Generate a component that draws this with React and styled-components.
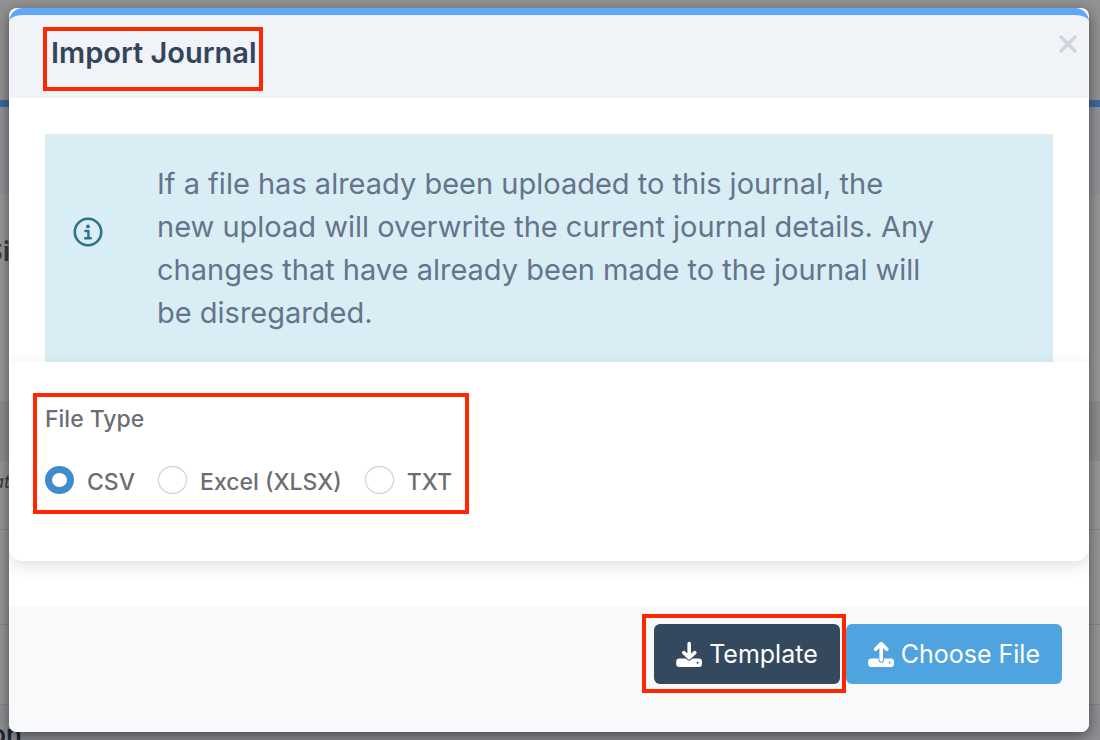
import React, { useState } from 'react';
import styled, { createGlobalStyle } from 'styled-components';

const fileTypes = [
  { value: 'csv', label: 'CSV' },
  { value: 'xlsx', label: 'Excel (XLSX)' },
  { value: 'txt', label: 'TXT' },
];

const arrows = {
  download: 'M13.2 2.6V16.6M7.8 11.6L13.2 16.8L18.8 11.6',
  upload: 'M13.2 19V2.8M7.6 8.2L13.2 2.6L18.8 8.2',
};

// arrow over a drive; $cut is the button colour showing round the arrow
const DriveIcon = ({ type, cut }) => (
  <svg viewBox="0 0 26 26" width="26" height="26" aria-hidden="true">
    <rect x="0.2" y="17.6" width="25.8" height="8.4" rx="3.2" fill="currentColor" />
    <circle cx="21.6" cy="21.8" r="1" fill={cut} />
    <g fill="none" strokeLinecap="round" strokeLinejoin="round">
      <path d={arrows[type]} stroke={cut} strokeWidth="5.4" />
      <path d={arrows[type]} stroke="currentColor" strokeWidth="3.6" />
    </g>
  </svg>
);

const App = () => {
  const [fileType, setFileType] = useState('csv');

  return (
    <>
      <GlobalStyle />
      <Page aria-hidden="true">
        <Band $height={100} $bg="#929292" />
        <Band $height={7} $bg="#3a6aa6" />
        <Band $height={87} $bg="#919398" />
        <Band $height={207} $bg="#989997" $pad={40}>
          <Peek $size={27} $bold>Si</Peek>
        </Band>
        <Band $height={60} $bg="#8d8e8d" />
        <Band $height={69} $bg="#979897" $line $pad={3}>
          <Peek $size={18} $italic>at</Peek>
        </Band>
        <Band $height={95} $bg="#979896" $line />
        <Band $height={80} $bg="#979896" $line />
        <Band $height={36} $bg="#8f9095" $pad={12}>
          <Peek $size={26} $bold $wide>on</Peek>
        </Band>
      </Page>

      <Overlay>
        <Modal role="dialog" aria-modal="true" aria-labelledby="import-title">
          <Header>
            <TitleMark>
              <Title id="import-title">Import Journal</Title>
            </TitleMark>
            <Close type="button" aria-label="Close">
              <svg viewBox="0 0 18 18" width="18" height="18" aria-hidden="true">
                <path d="M2 2L16 16M16 2L2 16" fill="none" stroke="currentColor" strokeWidth="3.2" strokeLinecap="round" />
              </svg>
            </Close>
          </Header>

          <Body>
            <Notice>
              <InfoIcon viewBox="0 0 30 30" aria-hidden="true">
                <circle cx="15" cy="15" r="13.2" fill="none" stroke="currentColor" strokeWidth="2.6" />
                <circle cx="15" cy="9.4" r="1.9" fill="currentColor" />
                <path d="M12.4 14H15.4V21M12.2 21.2H17.8" fill="none" stroke="currentColor" strokeWidth="2.4" strokeLinecap="round" strokeLinejoin="round" />
              </InfoIcon>
              <NoticeText>
                If a file has already been uploaded to this journal, the new upload will overwrite the
                current journal details. Any changes that have already been made to the journal will be
                disregarded.
              </NoticeText>
            </Notice>
          </Body>

          <Card>
            <TypeMark role="radiogroup" aria-labelledby="type-label">
              <TypeLabel id="type-label">File Type</TypeLabel>
              <Options>
                {fileTypes.map(({ value, label }) => (
                  <Option key={value}>
                    <Radio
                      type="radio"
                      name="fileType"
                      value={value}
                      checked={fileType === value}
                      onChange={() => setFileType(value)}
                    />
                    {label}
                  </Option>
                ))}
              </Options>
            </TypeMark>
          </Card>

          <Footer>
            <ButtonMark>
              <Button type="button" $bg="#34495e">
                <DriveIcon type="download" cut="#34495e" />
                Template
              </Button>
            </ButtonMark>
            <Button type="button" $bg="#4fa4e0">
              <DriveIcon type="upload" cut="#4fa4e0" />
              Choose File
            </Button>
          </Footer>
        </Modal>
      </Overlay>
    </>
  );
};

const GlobalStyle = createGlobalStyle`
  * {
    box-sizing: border-box;
  }

  body {
    margin: 0;
    background: #8f9095;
    font-family: Inter, "Liberation Sans", sans-serif;
    overflow: hidden;
  }
`;

const Page = styled.div`
  display: flex;
  flex-direction: column;
`;

const Band = styled.div`
  height: ${(p) => p.$height}px;
  padding-top: ${(p) => p.$pad || 0}px;
  background: ${(p) => p.$bg};
  border-bottom: ${(p) => (p.$line ? '1px solid #858685' : 'none')};
  overflow: hidden;
`;

/* the page text runs in from the left edge and is cut there */
const Peek = styled.span`
  display: flex;
  justify-content: flex-end;
  width: ${(p) => (p.$wide ? 22 : 10)}px;
  font-size: ${(p) => p.$size}px;
  line-height: 36px;
  font-weight: ${(p) => (p.$bold ? 600 : 400)};
  font-style: ${(p) => (p.$italic ? 'italic' : 'normal')};
  color: ${(p) => (p.$wide ? '#1d2836' : '#3b3d40')};
`;

const Overlay = styled.div`
  position: absolute;
  inset: 0;
  padding: 8px 11px 8px 9px;
`;

const Modal = styled.div`
  background: #fff;
  border-radius: 8px;
  box-shadow: 0 4px 14px rgba(0, 0, 0, 0.5);
  overflow: hidden;
`;

const Mark = styled.div`
  border: 4px solid #ff2600;
`;

const Header = styled.header`
  display: flex;
  align-items: flex-start;
  justify-content: space-between;
  padding: 12px 12px 7px 34px;
  background: #f0f3f8;
  border-top: 7px solid #60a5fa;
  border-radius: 14px 14px 0 0;
`;

const TitleMark = styled(Mark)`
  padding: 0 3px 12px 4px;
`;

const Title = styled.h1`
  margin: 0;
  font-size: 29px;
  line-height: 44px;
  font-weight: 600;
  color: #34455a;
`;

const Close = styled.button`
  display: flex;
  margin-top: 8px;
  padding: 0;
  border: none;
  background: none;
  color: #ced5dc;
  cursor: pointer;
`;

const Body = styled.div`
  padding: 36px 36px 0;
`;

const Notice = styled.div`
  display: flex;
  align-items: flex-start;
  gap: 54px;
  padding: 27px 112px 28px 28px;
  background: #d9edf5;
  border-top: 1px solid #e3e8ea;
  border-right: 1px solid #e3e8ea;
`;

const InfoIcon = styled.svg`
  flex: none;
  width: 30px;
  height: 30px;
  margin-top: 55px;
  color: #31708f;
`;

const NoticeText = styled.p`
  margin: 0;
  font-size: 29px;
  line-height: 43px;
  color: #64748b;
`;

const Card = styled.section`
  padding: 31px 24px 47px;
  background: #fff;
  border-radius: 0 0 14px 14px;
  box-shadow: 0 5px 16px rgba(30, 50, 45, 0.14);
`;

const TypeMark = styled(Mark)`
  width: fit-content;
  padding: 8px 13px 12px 8px;
`;

const TypeLabel = styled.div`
  margin-bottom: 33px;
  font-size: 23px;
  line-height: 28px;
  font-weight: 500;
  color: #6d6e71;
`;

const Options = styled.div`
  display: flex;
  gap: 23px;
`;

const Option = styled.label`
  display: flex;
  align-items: flex-start;
  gap: 13px;
  font-size: 23px;
  line-height: 32px;
  font-weight: 500;
  color: #6d6e71;
  white-space: nowrap;
`;

const Radio = styled.input`
  appearance: none;
  width: 29px;
  height: 28px;
  margin: 0;
  border: 1px solid #c9cacc;
  border-radius: 50%;
  background: #fff;

  &:checked {
    border: 7px solid #428bca;
  }
`;

const Footer = styled.footer`
  display: flex;
  align-items: center;
  justify-content: flex-end;
  margin-top: 45px;
  padding: 8px 27px 39px;
  background: #f8f9fb;
`;

const ButtonMark = styled(Mark)`
  padding: 6px 2px 5px 8px;
`;

const Button = styled.button`
  display: flex;
  align-items: center;
  gap: 7px;
  height: 60px;
  padding: 0 22px;
  border: none;
  border-radius: 6px;
  background: ${(p) => p.$bg};
  color: #fff;
  font-family: inherit;
  font-size: 25px;
  cursor: pointer;
`;

export default App;
